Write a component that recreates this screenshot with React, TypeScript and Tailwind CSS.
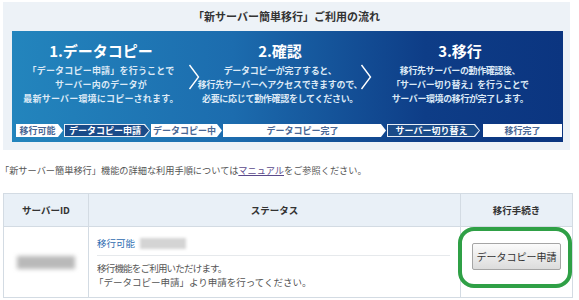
const jp = "font-['Noto_Sans_CJK_JP','Noto_Sans',sans-serif]";

const arrowClip =
  '[clip-path:polygon(0_0,calc(100%_-_5px)_0,100%_50%,calc(100%_-_5px)_100%,0_100%)]';

function Chevron() {
  return (
    <svg width="12" height="26" viewBox="0 0 12 26" className="shrink-0 self-start mt-[33px]">
      <path d="M1.5 1 L10.5 13 L1.5 25" fill="none" stroke="#ffffff" strokeWidth="1.4" />
    </svg>
  );
}

interface StepProps {
  title: string;
  lines: string[];
  width: string;
  tracking: string;
}

function Step({ title, lines, width, tracking }: StepProps) {
  return (
    <div className={`${width} shrink-0 flex flex-col items-center pt-[10px]`}>
      <div className="text-[15px] leading-[20px] font-bold text-white whitespace-nowrap">{title}</div>
      <div className={`mt-[3px] flex flex-col items-center text-[9px] leading-[14px] font-bold text-[#dce9f6] ${tracking}`}>
        {lines.map((l) => (
          <span key={l} className="whitespace-nowrap">
            {l}
          </span>
        ))}
      </div>
    </div>
  );
}

function WhiteChip({ label, width, arrow = true }: { label: string; width: string; arrow?: boolean }) {
  return (
    <div
      className={`${width} h-[13px] shrink-0 bg-white flex items-center justify-center text-[9px] font-bold text-[#4a6794] leading-none ${
        arrow ? arrowClip : ''
      }`}
    >
      <span className={arrow ? 'pr-[4px]' : ''}>{label}</span>
    </div>
  );
}

function OutlineChip({ label, width }: { label: string; width: string }) {
  return (
    <div className={`${width} h-[13px] shrink-0 bg-[#e8eef6] p-[1px] ${arrowClip}`}>
      <div
        className={`h-full w-full bg-[#1a4b89] flex items-center justify-center text-[9px] font-bold text-white leading-none ${arrowClip}`}
      >
        <span className="pr-[4px]">{label}</span>
      </div>
    </div>
  );
}

export default function App() {
  return (
    <div className={`w-[579px] h-[300px] bg-white overflow-hidden text-[#333] ${jp}`}>
      <div className="mx-[3px] mt-[2px] w-[567px] bg-[#edf2f7] pb-[8px]">
        <div className="h-[29px] flex items-center justify-center text-[11px] font-bold text-[#333]">
          「新サーバー簡単移行」ご利用の流れ
        </div>
        <div className="ml-[9px] w-[551px] h-[111px] bg-[linear-gradient(90deg,#2385bd_0%,#1c6cae_40%,#0e3d87_75%,#0b3580_100%)] flex flex-col">
          <div className="h-[93px] flex pl-[2px]">
            <Step
              title="1.データコピー"
              width="w-[174px]"
              tracking="tracking-[0.2px]"
              lines={['「データコピー申請」を行うことで', 'サーバー内のデータが', '最新サーバー環境にコピーされます。']}
            />
            <Chevron />
            <Step
              title="2.確認"
              width="w-[160px]"
              tracking="tracking-[-0.3px]"
              lines={['データコピーが完了すると、', '移行先サーバーへアクセスできますので、', '必要に応じて動作確認をしてください。']}
            />
            <Chevron />
            <Step
              title="3.移行"
              width="w-[176px]"
              tracking="tracking-[-0.4px]"
              lines={['移行先サーバーの動作確認後、', '「サーバー切り替え」を行うことで', 'サーバー環境の移行が完了します。']}
            />
          </div>
          <div className="flex items-center pl-[4px] gap-[1px]">
            <WhiteChip label="移行可能" width="w-[47px]" />
            <OutlineChip label="データコピー申請" width="w-[86px]" />
            <WhiteChip label="データコピー中" width="w-[71px]" />
            <WhiteChip label="データコピー完了" width="w-[163px]" />
            <OutlineChip label="サーバー切り替え" width="w-[93px]" />
            <div className="w-[1px]" />
            <WhiteChip label="移行完了" width="w-[79px]" arrow={false} />
          </div>
        </div>
      </div>

      <p className="mt-[13px] text-[9.2px] leading-[14px] text-[#555] whitespace-nowrap">
        「新サーバー簡単移行」機能の詳細な利用手順については
        <span className="underline text-[#5b4a8b]">マニュアル</span>
        をご参照ください。
      </p>

      <div className="mt-[16px] ml-[3px] w-[570px] border border-[#d3dbe3] text-[9.5px]">
        <div className="grid grid-cols-[85px_372px_111px] h-[33px] bg-[#e9f0f7] border-b border-[#d3dbe3] font-bold text-[#333]">
          <div className="flex items-center justify-center border-r border-[#d3dbe3]">サーバーID</div>
          <div className="flex items-center justify-center border-r border-[#d3dbe3]">ステータス</div>
          <div className="flex items-center justify-center">移行手続き</div>
        </div>
        <div className="grid grid-cols-[85px_372px_111px] h-[70px]">
          <div className="flex items-center justify-center border-r border-[#d3dbe3]">
            <div className="w-[58px] h-[13px] bg-[#b9b9b9] blur-[2px]" />
          </div>
          <div className="border-r border-[#d3dbe3] pl-[8px] pr-[10px] pt-[9px]">
            <div className="flex items-center h-[14px] gap-[5px]">
              <span className="text-[#2d6bb0] text-[9.5px]">移行可能</span>
              <span className="w-[46px] h-[11px] bg-[#d4d4d4] blur-[1.5px]" />
            </div>
            <div className="mt-[5px] border-t border-[#e6e9ec]" />
            <div className="mt-[5px] leading-[14px] text-[#555]">
              <div className="tracking-[-0.8px]">移行機能をご利用いただけます。</div>
              <div className="-ml-[3px]">「データコピー申請」より申請を行ってください。</div>
            </div>
          </div>
          <div className="relative flex justify-center pt-[16px]">
            <button className="w-[89px] h-[27px] border border-[#a5a5a5] rounded-[2px] bg-[linear-gradient(180deg,#fbfbfb,#dcdcdc)] text-[10px] text-[#333]">
              データコピー申請
            </button>
            <div className="absolute left-[-3px] top-[0px] w-[114px] h-[61px] border-[4px] border-[#2fa046] rounded-[16px]" />
          </div>
        </div>
      </div>
    </div>
  );
}
